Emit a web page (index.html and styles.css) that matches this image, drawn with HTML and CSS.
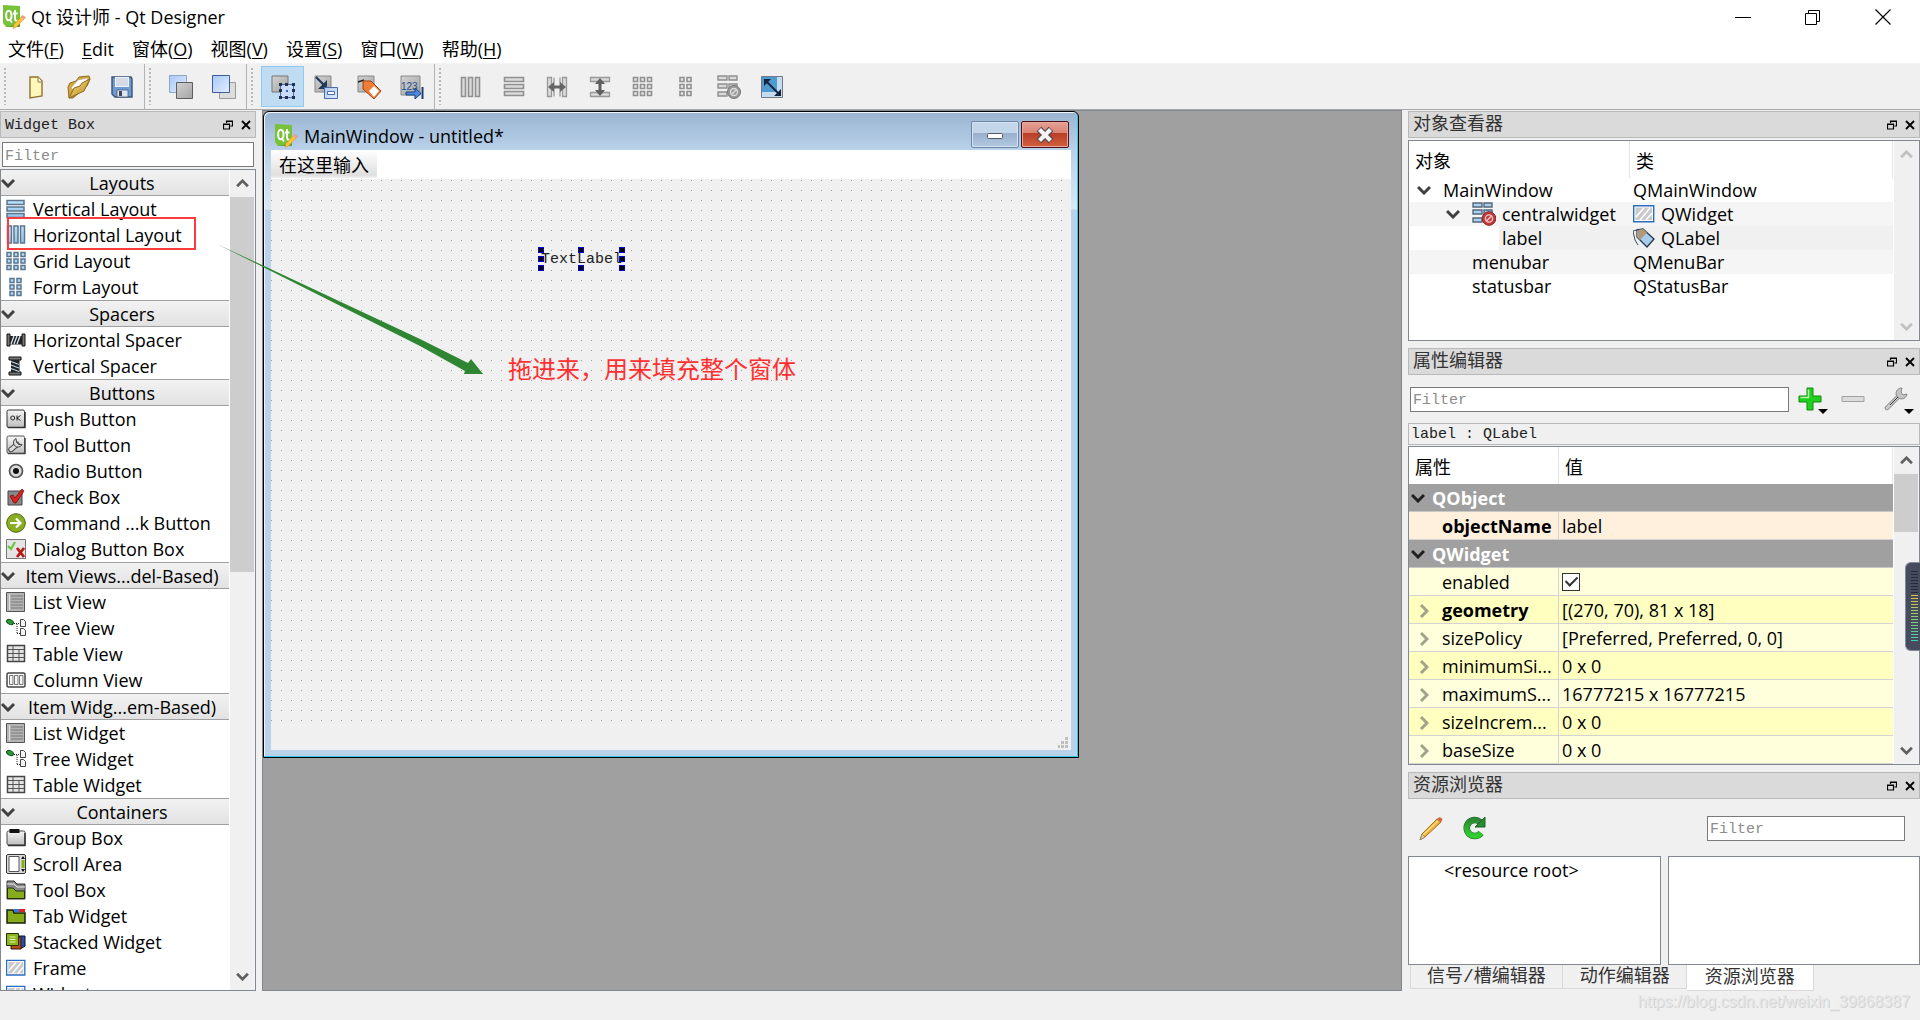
FILE: index.html
```html
<!DOCTYPE html>
<html lang="zh-CN">
<head>
<meta charset="utf-8">
<title>Qt 设计师 - Qt Designer</title>
<link rel="stylesheet" href="styles.css">
</head>
<body>
<svg class="defs" aria-hidden="true">
  <defs>
    <linearGradient id="blue" x1="0" y1="0" x2="1" y2="1"><stop offset="0" stop-color="#a9c8f8"/><stop offset="1" stop-color="#e3eeff"/></linearGradient>
    <linearGradient id="grey" x1="0" y1="0" x2="1" y2="1"><stop offset="0" stop-color="#d2d2d2"/><stop offset="1" stop-color="#a4a4a4"/></linearGradient>
    <linearGradient id="silver" x1="0" y1="0" x2="0" y2="1"><stop offset="0" stop-color="#f6f6f6"/><stop offset="1" stop-color="#bdbdbd"/></linearGradient>
    <linearGradient id="sky" x1="0" y1="0" x2="0" y2="1"><stop offset="0" stop-color="#bfe2f8"/><stop offset="1" stop-color="#8fc4ea"/></linearGradient>
    <linearGradient id="gold" x1="0" y1="0" x2="1" y2="1"><stop offset="0" stop-color="#f8dc84"/><stop offset="1" stop-color="#b98a1c"/></linearGradient>
    <linearGradient id="green" x1="0" y1="0" x2="0" y2="1"><stop offset="0" stop-color="#2c8a35"/><stop offset="1" stop-color="#2fd02f"/></linearGradient>
  </defs>
  <symbol id="qt" viewBox="0 0 24 24"><path d="M1 0 18 1V22L4 22 1 18Z" fill="#78c23a"/><path d="M4 22 18 22V19Z" fill="#5ca12a"/><ellipse cx="6.800" cy="10.500" rx="2.700" ry="4.800" fill="none" stroke="#fff" stroke-width="2"/><path d="M7.500 14l2.500 3.500M13 5v9q0 2 2.500 1.600M11 8.500h4.500" fill="none" stroke="#fff" stroke-width="1.800"/><path d="M20.500 10.500l3 2-9 9.500-3.500 1.500 1-4z" fill="#fbc43a" stroke="#c9862a" stroke-width=".5"/><path d="M20.500 10.500l3 2-1.500 1.800-3-2.200z" fill="#e89c9c"/></symbol>
  <symbol id="new" viewBox="0 0 24 24"><path d="M6 2h8l4 4v15L6 23z" fill="#fff6bd" stroke="#8f7327" stroke-width="1.400"/><path d="M14 2v5h4" fill="#fff" stroke="#8f7327"/></symbol>
  <symbol id="open" viewBox="0 0 24 24"><path d="M1 12 3 8l6-2 3-4 10-1 1 3-3 7-14 12H2z" fill="#d8a93a" stroke="#8d6a1c"/><path d="M4 13 11 5l10-2-3 8-10 5z" fill="#fff" stroke="#aaa" stroke-width=".6"/><path d="M2 23 7 13l6-2 2-3 8-4-6 12z" fill="url(#gold)" stroke="#8d6a1c"/></symbol>
  <symbol id="save" viewBox="0 0 24 24"><path d="M2 2h19l1 2v18H5l-3-3z" fill="#6f9bd2" stroke="#3b5274" stroke-width="1.400"/><path d="M5 2h14v10H5z" fill="#eef2f7"/><path d="M6 4h12M6 6h12M6 8h12M6 10h12" stroke="#b9c4d2"/><path d="M7 15h11v7H7z" fill="#dce4ee" stroke="#3b5274" stroke-width=".7"/><path d="M9 16h3v5H9z" fill="#445"/></symbol>
  <symbol id="back" viewBox="0 0 24 24"><path d="M.5.500h17v17H.5z" fill="url(#blue)" stroke="#8ea6c8"/><path d="M7.500 7.500h16v16h-16z" fill="url(#grey)" stroke="#5e5e5e"/></symbol>
  <symbol id="front" viewBox="0 0 24 24"><path d="M7.500 7.500h16v16h-16z" fill="#dcdcdc" stroke="#9a9a9a"/><path d="M.5.500h17v17H.5z" fill="url(#blue)" stroke="#3d5f9b"/></symbol>
  <symbol id="editw" viewBox="0 0 24 24"><path d="M1 1h16v16H1z" fill="url(#grey)" stroke="#777"/><path d="M9.500 9.500h13v13h-13z" fill="#c9dcfb" stroke="#4a6ba4"/><path d="M8 8h3v3H8zm6 0h3v3h-3zm7 0h3v3h-3zM8 14h3v3H8zm13 0h3v3h-3zM8 21h3v3H8zm6 0h3v3h-3zm7 0h3v3h-3z" fill="#20304e"/><path d="M15 15h2v2h-2z" fill="#3465c8"/></symbol>
  <symbol id="signal" viewBox="0 0 24 24"><path d="M1 1h16v16H1z" fill="url(#grey)" stroke="#888"/><path d="M2 2l9 9" stroke="#203a5a" stroke-width="2.200"/><path d="M13 5v9H4z" fill="#203a5a"/><path d="M10.500 12.500h13v11h-13z" fill="url(#blue)" stroke="#4a6ba4"/><path d="M13.500 16.500h7v3h-7z" fill="#fff" stroke="#4a6ba4"/></symbol>
  <symbol id="buddy" viewBox="0 0 24 24"><path d="M1 1h16v16H1z" fill="url(#grey)" stroke="#888"/><path d="M1 7l6-2" stroke="#222" stroke-width="1.500"/><path d="M6 6h8l10 10-7 8L6 14z" fill="#ef7d36" stroke="#9b4410"/><path d="M17 11l5 5-5 6-5-6z" fill="#fff"/></symbol>
  <symbol id="taborder" viewBox="0 0 24 24"><path d="M1 1h19v19H1z" fill="url(#grey)" stroke="#888"/><text x="1" y="15" font-family="Liberation Sans" font-size="10" fill="#1f4f94">123</text><path d="M6 17h9v-4l6 5.500-6 5.500v-4H6z" fill="#4c8be0" stroke="#1b3f7a"/><path d="M22.500 12v12" stroke="#1b3f7a" stroke-width="2"/></symbol>
  <symbol id="gh" viewBox="0 0 24 24"><path d="M2.500 2.500h4v19h-4zm7 0h4v19h-4zm7 0h4v19h-4z" fill="#dadada" stroke="#909090" stroke-width="1.600"/></symbol>
  <symbol id="gv" viewBox="0 0 24 24"><path d="M2.500 2.500h19v4h-19zm0 7h19v4h-19zm0 7h19v4h-19z" fill="#dadada" stroke="#909090" stroke-width="1.600"/></symbol>
  <symbol id="gsh" viewBox="0 0 24 24"><path d="M2.500 2.500h4v19h-4zm15 0h4v19h-4zM9 2.500v19m6-19v19" fill="#dadada" stroke="#999" stroke-width="1.300"/><path d="M3 12l6-5v3.500h6V7l6 5-6 5v-3.500H9V17z" fill="#666"/></symbol>
  <symbol id="gsv" viewBox="0 0 24 24"><path d="M2.500 2.500h19v4h-19zm0 15h19v4h-19z" fill="#dadada" stroke="#999" stroke-width="1.300"/><path d="M12 3l5 6h-3.500v6H17l-5 6-5-6h3.500V9H7z" fill="#606060"/></symbol>
  <symbol id="gg" viewBox="0 0 24 24"><path d="M2.500 2.500h4v4h-4zm7 0h4v4h-4zm7 0h4v4h-4zm-14 7h4v4h-4zm7 0h4v4h-4zm7 0h4v4h-4zm-14 7h4v4h-4zm7 0h4v4h-4zm7 0h4v4h-4z" fill="#e8e8e8" stroke="#909090" stroke-width="1.600"/></symbol>
  <symbol id="gf" viewBox="0 0 24 24"><path d="M6 2.500h4v4H6zm7 0h4v4h-4zm-7 7h4v4H6zm7 0h4v4h-4zm-7 7h4v4H6zm7 0h4v4h-4z" fill="#e8e8e8" stroke="#909090" stroke-width="1.600"/></symbol>
  <symbol id="gb" viewBox="0 0 24 24"><path d="M1 1h9v4H1zm11 0h8v4h-8zM1 9h9v4H1zm11 0h8v4h-8zM1 17h9v4H1z" fill="#dadada" stroke="#8f8f8f" stroke-width="1.400"/><circle cx="17" cy="17" r="6.500" fill="#999" stroke="#777"/><circle cx="17" cy="17" r="3.500" fill="none" stroke="#ddd" stroke-width="1.300"/><path d="M14.500 19.500l5-5" stroke="#ddd" stroke-width="1.500"/></symbol>
  <symbol id="adjust" viewBox="0 0 24 24"><path d="M1.500 1.500h21v21h-21z" fill="#c4dcf0" stroke="#778"/><path d="M2 2h15v15H2z" fill="#4f9bd0"/><path d="M6 6l12 12" stroke="#13233c" stroke-width="1.800"/><path d="M4 4h7l-7 7zM21 21h-7l7-7z" fill="#13233c"/></symbol>
  <symbol id="vl" viewBox="0 0 20 20"><path d="M1 1.500h17v4H1zm0 6.500h17v4H1zm0 6.500h17v4H1z" fill="url(#sky)" stroke="#5a7590" stroke-width="1.500"/></symbol>
  <symbol id="hl" viewBox="0 0 20 20"><path d="M1.500 1h4v17h-4zM8 1h4v17H8zm6.500 0h4v17h-4z" fill="url(#sky)" stroke="#5a7590" stroke-width="1.500"/></symbol>
  <symbol id="gl" viewBox="0 0 20 20"><path d="M1 1.500h4v4H1zm7 0h4v4H8zm7 0h4v4h-4zM1 8h4v4H1zm7 0h4v4H8zm7 0h4v4h-4zM1 14.500h4v4H1zm7 0h4v4H8zm7 0h4v4h-4z" fill="#b4daf4" stroke="#5a7590" stroke-width="1.500"/></symbol>
  <symbol id="fl" viewBox="0 0 20 20"><path d="M4 1.500h4v4H4zm7 0h4v4h-4zM4 8h4v4H4zm7 0h4v4h-4zm-7 6.500h4v4H4zm7 0h4v4h-4z" fill="#b4daf4" stroke="#5a7590" stroke-width="1.500"/></symbol>
  <symbol id="hs" viewBox="0 0 20 20"><path d="M1 4h3v12H1zm15 0h3v12h-3z" fill="#777" stroke="#111"/><path d="M4 6h12v8.500H4z" fill="#222"/><path d="M5 14l3-8m0 8l3-8m0 8l3-8" stroke="#d8e6f0" stroke-width="1.300"/></symbol>
  <symbol id="vs" viewBox="0 0 20 20"><path d="M3 1h12v3H3zm0 15h12v3H3z" fill="#777" stroke="#111"/><path d="M5 4h8.500v12H5z" fill="#222"/><path d="M5 5.500l8 3M5 9l8 3M5 12.500l8 3" stroke="#bcd6e6" stroke-width="1.300"/></symbol>
  <symbol id="pb" viewBox="0 0 20 20"><rect x="1" y="1" width="17.500" height="17.500" rx="1.500" fill="url(#silver)" stroke="#333"/><path d="M2 18.500h17V3" fill="none" stroke="#333" stroke-width="1.500"/><circle cx="6.700" cy="9" r="2" fill="none" stroke="#222"/><path d="M11 6.500v5m3.500-5L11 9l3.500 2.500" fill="none" stroke="#222"/></symbol>
  <symbol id="tb" viewBox="0 0 20 20"><rect x="1" y="1" width="17.500" height="17.500" rx="1.500" fill="url(#silver)" stroke="#555"/><path d="M2 18.500h17V3" fill="none" stroke="#444" stroke-width="1.500"/><path d="M5 14.500l6-5" stroke="#444" stroke-width="5.500" stroke-linecap="round"/><path d="M5 14.500l6-5" stroke="#ddd" stroke-width="3.500" stroke-linecap="round"/><path d="M10 3.500a4.500 4.500 0 1 0 6 6l-3.500 0-2-2.500z" fill="#ddd" stroke="#444"/></symbol>
  <symbol id="rb" viewBox="0 0 20 20"><circle cx="10" cy="10" r="6.500" fill="#ddd" stroke="#555" stroke-width="1.700"/><circle cx="10" cy="10" r="3" fill="#111"/></symbol>
  <symbol id="cb" viewBox="0 0 20 20"><path d="M2 4h14v14H2z" fill="#888" stroke="#444"/><path d="M4 9l3-1 2 3 7-9 2 2-8 12H8z" fill="#e02020" stroke="#6a0808" stroke-width=".7"/></symbol>
  <symbol id="cl" viewBox="0 0 20 20"><circle cx="10" cy="10" r="9.300" fill="#8aae22" stroke="#4c6610"/><path d="M4 10h10M10 5.500l4.500 4.500-4.500 4.500" fill="none" stroke="#fff" stroke-width="2.200"/></symbol>
  <symbol id="db" viewBox="0 0 20 20"><path d="M.5.500h19v19H.5z" fill="#e4e4e4" stroke="#777"/><path d="M2 7l3 3 4-7" fill="none" stroke="#64c83c" stroke-width="2.200"/><path d="M11 9l7 9m0-9l-7 9" stroke="#b81818" stroke-width="2.800"/></symbol>
  <symbol id="lv" viewBox="0 0 20 20"><path d="M.5.500h18v19H.5z" fill="#b4b4b4" stroke="#555"/><path d="M5 4h12M5 7h12M5 10h12M5 13h12M5 16h12" stroke="#777" stroke-width="1.200"/><path d="M3.500 2v16" stroke="#ddd"/></symbol>
  <symbol id="tv" viewBox="0 0 20 20"><ellipse cx="4" cy="4" rx="3.600" ry="2.300" transform="rotate(25 4 4)" fill="#2a9a35" stroke="#0d4d16"/><path d="M8 5.500h5M11 6v10m0-.5h3" stroke="#222" stroke-dasharray="1 1"/><path d="M14.500 1.500h3l2 2v5h-5zm0 9h3l2 2v5h-5z" fill="#f4f4f4" stroke="#444"/></symbol>
  <symbol id="tbl" viewBox="0 0 20 20"><path d="M1.500 1.500h17v16h-17z" fill="#e4e4e4" stroke="#444" stroke-width="1.500"/><path d="M1.500 5.500h17m-17 4h17m-17 4h17M7 1.500v16m6-12v12" stroke="#555"/></symbol>
  <symbol id="cv" viewBox="0 0 20 20"><rect x="1" y="3" width="18" height="14" rx="1.500" fill="#fff" stroke="#444" stroke-width="1.500"/><path d="M3.500 5.500h3.500v9H3.500zm5 0H12v9H8.500zm5 0h3.500v9h-3.500z" fill="#f5f5f5" stroke="#666" stroke-width=".9"/></symbol>
  <symbol id="gbx" viewBox="0 0 20 20"><rect x="1" y="3" width="18" height="14" rx="1.500" fill="url(#silver)" stroke="#444"/><path d="M2 17.500h17V5" fill="none" stroke="#333" stroke-width="1.500"/><path d="M3.500 1h10v4h-10z" fill="#111"/></symbol>
  <symbol id="sa" viewBox="0 0 20 20"><rect x=".5" y=".5" width="19" height="19" rx="1.500" fill="#ddd" stroke="#333"/><path d="M3 2.500h10v15H3z" fill="#fff" stroke="#555"/><path d="M15.500 6h3v8h-3z" fill="#86ac1c"/><path d="M15 5l2-3 2 3zm0 10l2 3 2-3z" fill="#111"/></symbol>
  <symbol id="tbx" viewBox="0 0 20 20"><path d="M1 1h7l3 3h8v15H1z" fill="#888" stroke="#333"/><path d="M1 4h7l3 3h8" fill="none" stroke="#eee"/><path d="M1.500 8H7l3 3h8.500v7.500h-17z" fill="#86ac1c" stroke="#22300a"/></symbol>
  <symbol id="tw" viewBox="0 0 20 20"><path d="M1 4h6l1 3h11v10H1z" fill="#86ac1c" stroke="#16200a" stroke-width="1.500"/><path d="M8 3h5v3H8z" fill="#2a7ae0"/><path d="M13 3h6v3h-6z" fill="#e02020"/></symbol>
  <symbol id="sw" viewBox="0 0 20 20"><path d="M9 4h10v10l-3 2H9z" fill="#2050b8" stroke="#111"/><path d="M5 5h10v12H5z" fill="#b84a18" stroke="#3a1405"/><path d="M.5 1.500h12v12H.5z" fill="#8cb41e" stroke="#22300a"/><path d="M3.500 5h6m-6 2.500h6m-6 2.500h6" stroke="#e8f4b0"/></symbol>
  <symbol id="fr" viewBox="0 0 22 20"><path d="M.7 1.700h20v16H.7z" fill="#fff" stroke="#2a6cc0" stroke-width="1.400"/><path d="M2.500 3.500h16.500v12.500H2.500z" fill="#c9c9c9"/><path d="M3 13l8-9M7 16l10-12M13 16l6-7" stroke="#fff" stroke-width="1.600"/></symbol>
  <symbol id="broken" viewBox="0 0 24 24"><path d="M1 1h9v4H1zm11 0h8v4h-8zM1 8h9v4H1zm11 0h8v4h-8zM1 16h9v4H1z" fill="#a9d2f0" stroke="#54677c" stroke-width="1.400"/><circle cx="17" cy="16.500" r="6.800" fill="#c23a3a" stroke="#872020"/><circle cx="17" cy="16.500" r="3.600" fill="none" stroke="#f0c8c8" stroke-width="1.300"/><path d="M14.500 19l5-5" stroke="#f0c8c8" stroke-width="1.500"/></symbol>
  <symbol id="tag" viewBox="0 0 22 20"><path d="M4 2l6-1 11 10-7 8L4 9z" fill="#a8ccee" stroke="#22384e" stroke-width="1.300"/><path d="M4 2l6-1 4 3.500L7 12 4 9z" fill="#b09a7c"/><path d="M0 3l6-1.500M0 3l2 9 3 5" fill="none" stroke="#22384e" stroke-width=".9"/></symbol>
  <symbol id="down" viewBox="0 0 14 10"><path d="M1 2l6 6 6-6" fill="none" stroke="currentColor" stroke-width="3"/></symbol>
  <symbol id="up" viewBox="0 0 14 10"><path d="M1 8l6-6 6 6" fill="none" stroke="currentColor" stroke-width="3"/></symbol>
  <symbol id="right" viewBox="0 0 10 14"><path d="M2 1l6 6-6 6" fill="none" stroke="currentColor" stroke-width="3"/></symbol>
  <symbol id="float" viewBox="0 0 10 10"><path d="M3.500 3V1h6v5h-2M3 1.500h7" fill="none" stroke="#000" stroke-width="1.200"/><path d="M.5 4h6v5h-6zM0 4.500h7" fill="none" stroke="#000" stroke-width="1.200"/></symbol>
  <symbol id="x" viewBox="0 0 10 10"><path d="M1 1l8 8M9 1L1 9" stroke="#000" stroke-width="1.800"/></symbol>
  <symbol id="plus" viewBox="0 0 24 24"><path d="M9 1h6v8h8v6h-8v8H9v-8H1V9h8z" fill="#1fd01f" stroke="#0f8a0f"/><path d="M10.500 2.500v8h-8" fill="none" stroke="#b6f7a6" stroke-width="1.500"/></symbol>
  <symbol id="minus" viewBox="0 0 24 24"><path d="M1 9.500h22v5H1z" fill="#dcdcdc" stroke="#a2a2a2"/></symbol>
  <symbol id="wrench" viewBox="0 0 24 24"><path d="M3 21L16 8" stroke="#777" stroke-width="4.500" stroke-linecap="round"/><path d="M3 21L16 8" stroke="#d0d0d0" stroke-width="3" stroke-linecap="round"/><path d="M18 1a5.500 5.500 0 1 0 5 6l-4 1-2-3z" fill="#c4c4c4" stroke="#8a8a8a"/><path d="M6 18l8-8" stroke="#333"/></symbol>
  <symbol id="pencil" viewBox="0 0 24 24"><path d="M18 3l4 3L6 21l-5 3 2-6z" fill="#f0b032" stroke="#a5711a"/><path d="M19 5L4 19" stroke="#fbdc8c" stroke-width="1.500"/><path d="M18 3q2-3 4.500-1 2 2-.5 4z" fill="#d0664a"/><path d="M1 24l2-6 3 3z" fill="#e8cf9a" stroke="#777" stroke-width=".6"/></symbol>
  <symbol id="reload" viewBox="0 0 24 24"><path d="M19 17a8 8 0 1 1-1-11" fill="none" stroke="#16651d" stroke-width="6.500"/><path d="M19 17a8 8 0 1 1-1-11" fill="none" stroke="url(#green)" stroke-width="5.500"/><path d="M23 1v10H13z" fill="#2c8a35" stroke="#16651d"/></symbol>
</svg>

<div class="app">
  <header class="titlebar">
    <svg class="i24"><use href="#qt"/></svg>
    <h1>Qt 设计师 - Qt Designer</h1>
    <div class="winctl">
      <button aria-label="最小化"><svg width="16" height="16"><path d="M0 8.500h16" stroke="#000"/></svg></button>
      <button aria-label="还原"><svg width="16" height="16" fill="none" stroke="#000"><path d="M.5 4.500h11v11H.5zM3.500 4V1.500h11v11H12"/></svg></button>
      <button aria-label="关闭"><svg width="16" height="16"><path d="M.5.500l15 15m0-15l-15 15" stroke="#000" stroke-width="1.200"/></svg></button>
    </div>
  </header>
  <nav class="menubar">
    <button>文件(<u>F</u>)</button><button><u>E</u>dit</button><button>窗体(<u>O</u>)</button><button>视图(<u>V</u>)</button><button>设置(<u>S</u>)</button><button>窗口(<u>W</u>)</button><button>帮助(<u>H</u>)</button>
  </nav>
  <div class="toolbar">
    <div class="tgroup">
      <button aria-label="新建"><svg class="i24"><use href="#new"/></svg></button>
      <button aria-label="打开"><svg class="i24"><use href="#open"/></svg></button>
      <button aria-label="保存"><svg class="i24"><use href="#save"/></svg></button>
    </div>
    <div class="tgroup">
      <button aria-label="置后"><svg class="i24"><use href="#back"/></svg></button>
      <button aria-label="置前"><svg class="i24"><use href="#front"/></svg></button>
    </div>
    <div class="tgroup">
      <button class="on" aria-label="编辑控件"><svg class="i24"><use href="#editw"/></svg></button>
      <button aria-label="编辑信号/槽"><svg class="i24"><use href="#signal"/></svg></button>
      <button aria-label="编辑伙伴"><svg class="i24"><use href="#buddy"/></svg></button>
      <button aria-label="编辑 Tab 顺序"><svg class="i24"><use href="#taborder"/></svg></button>
    </div>
    <div class="tgroup last">
      <button aria-label="水平布局"><svg class="i24"><use href="#gh"/></svg></button>
      <button aria-label="垂直布局"><svg class="i24"><use href="#gv"/></svg></button>
      <button aria-label="水平分裂器"><svg class="i24"><use href="#gsh"/></svg></button>
      <button aria-label="垂直分裂器"><svg class="i24"><use href="#gsv"/></svg></button>
      <button aria-label="栅格布局"><svg class="i24"><use href="#gg"/></svg></button>
      <button aria-label="窗体布局"><svg class="i24"><use href="#gf"/></svg></button>
      <button aria-label="打破布局"><svg class="i24"><use href="#gb"/></svg></button>
      <button aria-label="调整大小"><svg class="i24"><use href="#adjust"/></svg></button>
    </div>
  </div>

  <main class="work">
    <section class="dock left">
      <div class="docktitle"><h2>Widget Box</h2><button aria-label="浮动"><svg class="i10"><use href="#float"/></svg></button><button aria-label="关闭"><svg class="i10"><use href="#x"/></svg></button></div>
      <input class="filter" type="text" placeholder="Filter" aria-label="Filter widgets">
      <div class="frame widgets">
        <div class="list">
          <h3><svg class="chev"><use href="#down"/></svg><span>Layouts</span></h3>
          <ul>
            <li><svg class="i20"><use href="#vl"/></svg>Vertical Layout</li>
            <li class="marked"><svg class="i20"><use href="#hl"/></svg>Horizontal Layout</li>
            <li><svg class="i20"><use href="#gl"/></svg>Grid Layout</li>
            <li><svg class="i20"><use href="#fl"/></svg>Form Layout</li>
          </ul>
          <h3><svg class="chev"><use href="#down"/></svg><span>Spacers</span></h3>
          <ul>
            <li><svg class="i20"><use href="#hs"/></svg>Horizontal Spacer</li>
            <li><svg class="i20"><use href="#vs"/></svg>Vertical Spacer</li>
          </ul>
          <h3><svg class="chev"><use href="#down"/></svg><span>Buttons</span></h3>
          <ul>
            <li><svg class="i20"><use href="#pb"/></svg>Push Button</li>
            <li><svg class="i20"><use href="#tb"/></svg>Tool Button</li>
            <li><svg class="i20"><use href="#rb"/></svg>Radio Button</li>
            <li><svg class="i20"><use href="#cb"/></svg>Check Box</li>
            <li><svg class="i20"><use href="#cl"/></svg>Command ...k Button</li>
            <li><svg class="i20"><use href="#db"/></svg>Dialog Button Box</li>
          </ul>
          <h3><svg class="chev"><use href="#down"/></svg><span>Item Views...del-Based)</span></h3>
          <ul>
            <li><svg class="i20"><use href="#lv"/></svg>List View</li>
            <li><svg class="i20"><use href="#tv"/></svg>Tree View</li>
            <li><svg class="i20"><use href="#tbl"/></svg>Table View</li>
            <li><svg class="i20"><use href="#cv"/></svg>Column View</li>
          </ul>
          <h3><svg class="chev"><use href="#down"/></svg><span>Item Widg...em-Based)</span></h3>
          <ul>
            <li><svg class="i20"><use href="#lv"/></svg>List Widget</li>
            <li><svg class="i20"><use href="#tv"/></svg>Tree Widget</li>
            <li><svg class="i20"><use href="#tbl"/></svg>Table Widget</li>
          </ul>
          <h3><svg class="chev"><use href="#down"/></svg><span>Containers</span></h3>
          <ul>
            <li><svg class="i20"><use href="#gbx"/></svg>Group Box</li>
            <li><svg class="i20"><use href="#sa"/></svg>Scroll Area</li>
            <li><svg class="i20"><use href="#tbx"/></svg>Tool Box</li>
            <li><svg class="i20"><use href="#tw"/></svg>Tab Widget</li>
            <li><svg class="i20"><use href="#sw"/></svg>Stacked Widget</li>
            <li><svg class="i20"><use href="#fr"/></svg>Frame</li>
            <li><svg class="i20"><use href="#fr"/></svg>Widget</li>
          </ul>
        </div>
        <div class="scroll"><svg class="arrow"><use href="#up"/></svg><div class="track"><div class="thumb long"></div></div><svg class="arrow"><use href="#down"/></svg></div>
      </div>
    </section>

    <section class="mdi">
      <div class="form">
        <div class="formtitle">
          <svg class="i24"><use href="#qt"/></svg>
          <h2>MainWindow - untitled*</h2>
          <button class="min" aria-label="最小化窗体"><svg width="20" height="20"><rect x="2.500" y="8.500" width="15" height="5" rx="1" fill="#fff" stroke="#556"/></svg></button>
          <button class="close" aria-label="关闭窗体"><svg width="20" height="20"><path d="M4 4l12 12M16 4L4 16" stroke="#4c4450" stroke-width="6.500"/><path d="M4.500 4.500l11 11M15.500 4.500l-11 11" stroke="#f4f4f4" stroke-width="4.200"/></svg></button>
        </div>
        <div class="formmenu"><button>在这里输入</button></div>
        <div class="canvas">
          <div class="sel">TextLabel<i></i><i></i><i></i><i></i><i></i><i></i><i></i><i></i></div>
          <p class="note">拖进来，用来填充整个窗体</p>
        </div>
        <div class="formstatus"><svg width="10" height="11" fill="#bfbfbf"><path d="M7 0h3v3H7zM3 4h3v3H3zm4 0h3v3H7zM0 8h2v3H0zm3 0h3v3H3zm4 0h3v3H7z"/></svg></div>
      </div>
    </section>

    <div class="right">
      <section class="dock grow">
        <div class="docktitle"><h2>对象查看器</h2><button aria-label="浮动"><svg class="i10"><use href="#float"/></svg></button><button aria-label="关闭"><svg class="i10"><use href="#x"/></svg></button></div>
        <div class="frame grow">
          <div class="pane">
            <table class="tree">
              <colgroup><col class="c-obj"><col></colgroup>
              <thead><tr><th>对象</th><th>类</th></tr></thead>
              <tbody>
                <tr><td><div class="node"><svg class="chev"><use href="#down"/></svg>MainWindow</div></td><td>QMainWindow</td></tr>
                <tr class="alt"><td><div class="node n2"><svg class="chev"><use href="#down"/></svg><svg class="i24"><use href="#broken"/></svg>centralwidget</div></td><td><div class="cls"><svg class="i22"><use href="#fr"/></svg>QWidget</div></td></tr>
                <tr class="cur"><td><div class="leaf n3">label</div></td><td><div class="cls"><svg class="i22"><use href="#tag"/></svg>QLabel</div></td></tr>
                <tr class="alt"><td><div class="leaf">menubar</div></td><td>QMenuBar</td></tr>
                <tr><td><div class="leaf">statusbar</div></td><td>QStatusBar</td></tr>
              </tbody>
            </table>
          </div>
          <div class="scroll off"><svg class="arrow"><use href="#up"/></svg><div class="track"></div><svg class="arrow"><use href="#down"/></svg></div>
        </div>
      </section>

      <section class="dock">
        <div class="docktitle"><h2>属性编辑器</h2><button aria-label="浮动"><svg class="i10"><use href="#float"/></svg></button><button aria-label="关闭"><svg class="i10"><use href="#x"/></svg></button></div>
        <div class="propbar">
          <input class="filter" type="text" placeholder="Filter" aria-label="Filter properties">
          <button class="drop" aria-label="添加"><svg class="i24"><use href="#plus"/></svg></button>
          <button aria-label="删除"><svg class="i24"><use href="#minus"/></svg></button>
          <button class="drop" aria-label="配置"><svg class="i24"><use href="#wrench"/></svg></button>
        </div>
        <div class="current">label : QLabel</div>
        <div class="frame">
          <div class="pane">
            <table class="props">
              <colgroup><col class="c-prop"><col></colgroup>
              <thead><tr><th>属性</th><th>值</th></tr></thead>
              <tbody>
                <tr class="grp"><th colspan="2"><div class="node"><svg class="chev"><use href="#down"/></svg>QObject</div></th></tr>
                <tr class="o"><td><b>objectName</b></td><td>label</td></tr>
                <tr class="grp"><th colspan="2"><div class="node"><svg class="chev"><use href="#down"/></svg>QWidget</div></th></tr>
                <tr class="y1"><td>enabled</td><td><input type="checkbox" checked aria-label="enabled"></td></tr>
                <tr class="y2 sub"><td><svg class="exp"><use href="#right"/></svg><b>geometry</b></td><td>[(270, 70), 81 x 18]</td></tr>
                <tr class="y1 sub"><td><svg class="exp"><use href="#right"/></svg>sizePolicy</td><td>[Preferred, Preferred, 0, 0]</td></tr>
                <tr class="y2 sub"><td><svg class="exp"><use href="#right"/></svg>minimumSi...</td><td>0 x 0</td></tr>
                <tr class="y1 sub"><td><svg class="exp"><use href="#right"/></svg>maximumS...</td><td>16777215 x 16777215</td></tr>
                <tr class="y2 sub"><td><svg class="exp"><use href="#right"/></svg>sizeIncrem...</td><td>0 x 0</td></tr>
                <tr class="y1 sub"><td><svg class="exp"><use href="#right"/></svg>baseSize</td><td>0 x 0</td></tr>
              </tbody>
            </table>
          </div>
          <div class="scroll"><svg class="arrow"><use href="#up"/></svg><div class="track"><div class="thumb short"></div></div><svg class="arrow"><use href="#down"/></svg></div>
        </div>
      </section>

      <section class="dock">
        <div class="docktitle"><h2>资源浏览器</h2><button aria-label="浮动"><svg class="i10"><use href="#float"/></svg></button><button aria-label="关闭"><svg class="i10"><use href="#x"/></svg></button></div>
        <div class="resbar">
          <button aria-label="编辑资源"><svg class="i24"><use href="#pencil"/></svg></button>
          <button aria-label="重新加载"><svg class="i24"><use href="#reload"/></svg></button>
          <input class="filter" type="text" placeholder="Filter" aria-label="Filter resources">
        </div>
        <div class="respanes"><div class="frame">&lt;resource root&gt;</div><div class="frame"></div></div>
      </section>
      <div class="tabs"><button>信号/槽编辑器</button><button>动作编辑器</button><button class="active">资源浏览器</button></div>
    </div>
  </main>
  <footer class="status">https://blog.csdn.net/weixin_39868387</footer>

  <svg class="pointer" width="268" height="132"><path d="M0 0 203 95 251 119 254 115 266 130 247 130 248 127 203 102Z" fill="#2f8632"/></svg>
  <div class="gauge"><span></span></div>
</div>
</body>
</html>
```
FILE: styles.css
```css
*, *::before, *::after { box-sizing: border-box; }
body { margin: 0; font: 18px/26px "Open Sans", "Noto Sans CJK SC", sans-serif; color: #000; background: #f0f0f0; }
button { font: inherit; color: inherit; background: none; border: 0; padding: 0; }
h1, h2, h3, p, ul { margin: 0; padding: 0; font-size: 18px; font-weight: 400; list-style: none; }
svg { display: block; flex: none; }
.defs { position: absolute; width: 0; height: 0; }
.i24 { width: 24px; height: 24px; }
.i22 { width: 22px; height: 20px; }
.i20 { width: 20px; height: 20px; }
.i10 { width: 10px; height: 10px; }
.chev { width: 14px; height: 10px; color: #404040; }
.grow { flex: 1; min-height: 0; }

.app { position: relative; display: flex; flex-direction: column; height: 100vh; overflow: hidden; }
.titlebar { display: flex; align-items: center; height: 34px; padding: 0 2px; background: #fff; gap: 5px; }
.titlebar h1 { flex: 1; }
.winctl { display: flex; }
.winctl button { width: 70px; height: 34px; display: grid; place-items: center; }
.menubar { display: flex; gap: 2px; height: 30px; background: #fff; border-bottom: 1px solid #f4f4f4; }
.menubar button { padding: 0 8px; white-space: nowrap; }
.menubar u { text-underline-offset: 2px; text-decoration-thickness: 1px; }
.toolbar { display: flex; height: 46px; border-bottom: 1px solid #a8a8a8; background: #f0f0f0; }
.tgroup { position: relative; display: flex; align-items: center; padding: 0 1px 0 14px; border-right: 1px solid #b4b4b4; }
.tgroup::before { content: ""; position: absolute; left: 4px; top: 4px; bottom: 4px; width: 2px; background: repeating-linear-gradient(#b8b8b8 0 2px, transparent 2px 4px); }
.tgroup.last { border: 0; }
.tgroup button { width: 43px; height: 41px; display: grid; place-items: center; border: 1px solid transparent; }
.tgroup .on { background: #c0dcf3; border-color: #90c8f6; }

.work { flex: 1; min-height: 0; display: flex; gap: 6px; }
.dock { display: flex; flex-direction: column; }
.docktitle { display: flex; align-items: center; gap: 8px; height: 27px; padding: 0 4px; background: #dadada; border: 1px solid #b9b9b9; }
.docktitle h2 { flex: 1; padding-top: 2px; font: 15px/23px "Liberation Mono", "Noto Sans CJK SC", monospace; color: #222; }
.right .docktitle h2 { padding-top: 1px; font-size: 18px; color: #333; }
.filter { height: 25px; border: 1px solid #7a7a7a; background: #fff; padding: 3px 2px 0; font: 15px "Liberation Mono", monospace; color: #000; border-radius: 0; outline: 0; min-width: 0; }
.filter::placeholder { color: #8c8c8c; opacity: 1; }
.frame { display: flex; background: #fff; border: 1px solid #828790; }

.left { width: 256px; padding-top: 1px; }
.left .filter { margin: 4px 2px 2px; }
.widgets { flex: 1; min-height: 0; }
.list { flex: 1; overflow: hidden; }
.list h3 { display: flex; align-items: center; height: 27px; border: solid #a0a0a0; border-width: 1px 0; background: linear-gradient(#f2f2f2, #e2e2e2); line-height: 24px; }
.list h3:first-child { height: 26px; border-top: 0; }
.list h3 span { flex: 1; text-align: center; white-space: nowrap; }
.list li { display: flex; align-items: center; gap: 7px; height: 26px; padding-left: 5px; white-space: nowrap; }
.marked { position: relative; }
.marked::after { content: ""; position: absolute; left: 6px; top: -5px; width: 189px; height: 33px; border: 2px solid #fa3c3c; }

.scroll { width: 26px; flex: none; display: flex; flex-direction: column; align-items: center; background: #f0f0f0; border-left: 1px solid #fff; border-right: 1px solid #f6f6f6; color: #606060; }
.scroll.off { color: #c0c0c0; }
.arrow { width: 13px; height: 9px; margin: 9px 0; }
.track { flex: 1; width: 100%; }
.thumb { background: #cdcdcd; }
.long { height: 49%; }
.short { height: 58px; }

.mdi { flex: 1; min-width: 0; position: relative; background: #a0a0a0; border: 1px solid #828790; overflow: hidden; }
.form { position: absolute; left: 0; top: 0; width: 816px; padding: 0 7px 7px; border: 1px solid #000; border-radius: 6px 6px 0 0; background: linear-gradient(#9ab4d1, #b9d1ea 38px, #dbe7f5 97px, #b9d1ea 98px); box-shadow: inset -1px -1px #35c8e6, inset 1px 1px #eef5fc; }
.formtitle { display: flex; align-items: center; height: 38px; padding: 9px 2px 0 3px; }
.formtitle h2 { flex: 1; padding-left: 6px; }
.formtitle button { width: 48px; height: 27px; margin: 0 0 2px 2px; display: grid; place-items: center; border-radius: 2px; }
.formtitle .min { border: 1px solid #6c86a8; background: linear-gradient(#c3d5e8 45%, #98b0cd 45%, #b3c9e2); box-shadow: inset 0 0 0 1px #d5e3f2; }
.formtitle .close { border: 1px solid #4c1016; background: linear-gradient(#e4a196, #db8474 42%, #b83c26 42%, #d0603e); box-shadow: inset 0 0 0 1px #e8a89c; }
.formmenu { height: 29px; background: #fff; }
.formmenu button { height: 28px; padding: 2px 8px 0; background: linear-gradient(#fff, #dfdfdf 90%, #f2f2f2); }
.canvas { position: relative; height: 542px; background: conic-gradient(from 270deg at 1px 1px, #9c9c9c 90deg, #f0f0f0 0) 0 1px / 10px 10px; }
.sel { position: absolute; left: 270px; top: 71px; width: 81px; height: 18px; font: 15px/20px "Liberation Mono", monospace; color: #222; }
.sel i { position: absolute; width: 6px; height: 6px; background: #000; border: 1px solid #0000e0; }
.sel i:nth-child(3n+1) { top: -3px; }
.sel i:nth-child(3n+2) { top: 15px; }
.sel i:nth-child(3n) { top: 6px; }
.sel i:nth-child(-n+3) { left: -3px; }
.sel i:nth-child(n+4) { left: 37px; }
.sel i:nth-child(n+6) { left: 78px; }
.note { position: absolute; left: 237px; top: 172px; font-size: 24px; line-height: 36px; color: #ff3030; white-space: nowrap; }
.formstatus { height: 29px; background: #f0f0f0; display: flex; justify-content: flex-end; align-items: flex-end; padding: 0 3px 2px 0; }

.right { width: 512px; padding-top: 1px; display: flex; flex-direction: column; gap: 7px; }
.dock.grow .docktitle { margin-bottom: 2px; }
.pane { flex: 1; min-width: 0; overflow: hidden; }
table { width: 100%; table-layout: fixed; border-collapse: separate; border-spacing: 0; }
th, td { padding: 0; font-weight: 400; text-align: left; white-space: nowrap; overflow: hidden; line-height: 24px; }
thead th { height: 37px; padding: 3px 6px 0; border-right: 1px solid #e5e5e5; }
.c-obj { width: 221px; }
.c-prop { width: 150px; }
.tree td { height: 24px; padding-left: 3px; }
.tree td:first-child { padding-left: 0; }
.tree .alt td { background: #f5f5f5; }
.cur td { background: #f0f0f0; }
.cur td:first-child { background: linear-gradient(90deg, #fff 90px, #f0f0f0 90px); }
.node, .cls { display: flex; align-items: center; height: 24px; gap: 6px; }
.tree .node { padding-left: 8px; gap: 12px; }
.tree .n2 { padding-left: 37px; gap: 6px; }
.n2 .chev { margin-right: 6px; }
.leaf { padding-left: 63px; }
.leaf.n3 { padding-left: 93px; }

.propbar { display: flex; align-items: center; height: 48px; padding: 0 12px 0 2px; gap: 19px; }
.propbar .filter { flex: 1; margin-right: -10px; }
.propbar button { position: relative; }
.drop::after { content: ""; position: absolute; right: -6px; bottom: -3px; border: 5px solid transparent; border-top-color: #000; border-bottom: 0; }
.current { height: 22px; margin-bottom: 1px; border: 1px solid #b9b9b9; padding: 1px 0 0 2px; font: 15px/20px "Liberation Mono", monospace; color: #222; }
.props tbody td { height: 28px; border: solid #d3d3d3; border-width: 0 1px 1px 0; padding-left: 3px; }
.props tbody td:first-child { padding-left: 33px; }
.props tbody td:last-child { border-right: 0; }
.props .sub td:first-child { padding-left: 10px; }
.props .grp th { height: 28px; background: #a0a0a0; border-bottom: 1px solid #c8c8c8; color: #fff; font-weight: 700; }
.props .node { padding-left: 2px; gap: 7px; }
.props .node .chev { color: #202020; }
.o td { background: #fff0de; }
.y1 td { background: #ffffdc; }
.y2 td { background: #ffffbf; }
.exp { display: inline-block; width: 10px; height: 14px; margin-right: 13px; color: #a3a38c; vertical-align: -1px; }
.props input { display: block; appearance: none; width: 18px; height: 18px; margin: 0; border: 1px solid #333; background: #fff; }
.props input:checked::before { content: ""; display: block; width: 7px; height: 12px; margin: 0 0 0 5px; border: solid #333; border-width: 0 2px 2px 0; transform: rotate(45deg); }

.resbar { display: flex; align-items: center; height: 57px; padding: 1px 15px 0 11px; gap: 19px; }
.resbar .filter { width: 198px; margin-left: auto; }
.respanes { display: flex; gap: 7px; }
.respanes .frame { flex: 1; height: 109px; padding-left: 35px; }
.tabs { display: flex; height: 26px; margin: -7px 0 0 2px; font: 18px/24px "Liberation Mono", "Noto Sans CJK SC", monospace; color: #333; }
.tabs button { height: 24px; padding: 0 16px; border: 1px solid #d9d9d9; border-top: 0; white-space: nowrap; }
.tabs button + button { padding: 0 16px 0 17px; border-left: 0; }
.tabs .active.active { height: 26px; padding: 0 18px; background: #fff; }
.status { height: 29px; padding-right: 10px; text-align: right; font: 16px/22px "Liberation Sans", sans-serif; color: #e6e6e6; text-shadow: 1px 1px #d2d2d2; }

.pointer { position: absolute; left: 217px; top: 244px; }
.gauge { position: absolute; right: 0; top: 562px; width: 15px; height: 89px; padding: 8px 2px 10px 5px; background: #474b5e; border: solid #85889a; border-width: 1px 0 1px 1px; border-radius: 6px 0 0 6px; }
.gauge span { display: block; height: 70px; background: repeating-linear-gradient(transparent 0 1px, #474b5e 1px 3px), linear-gradient(#272a38 35%, #e0c040 35%, #a0d060 60%, #40d0b8); }
```
